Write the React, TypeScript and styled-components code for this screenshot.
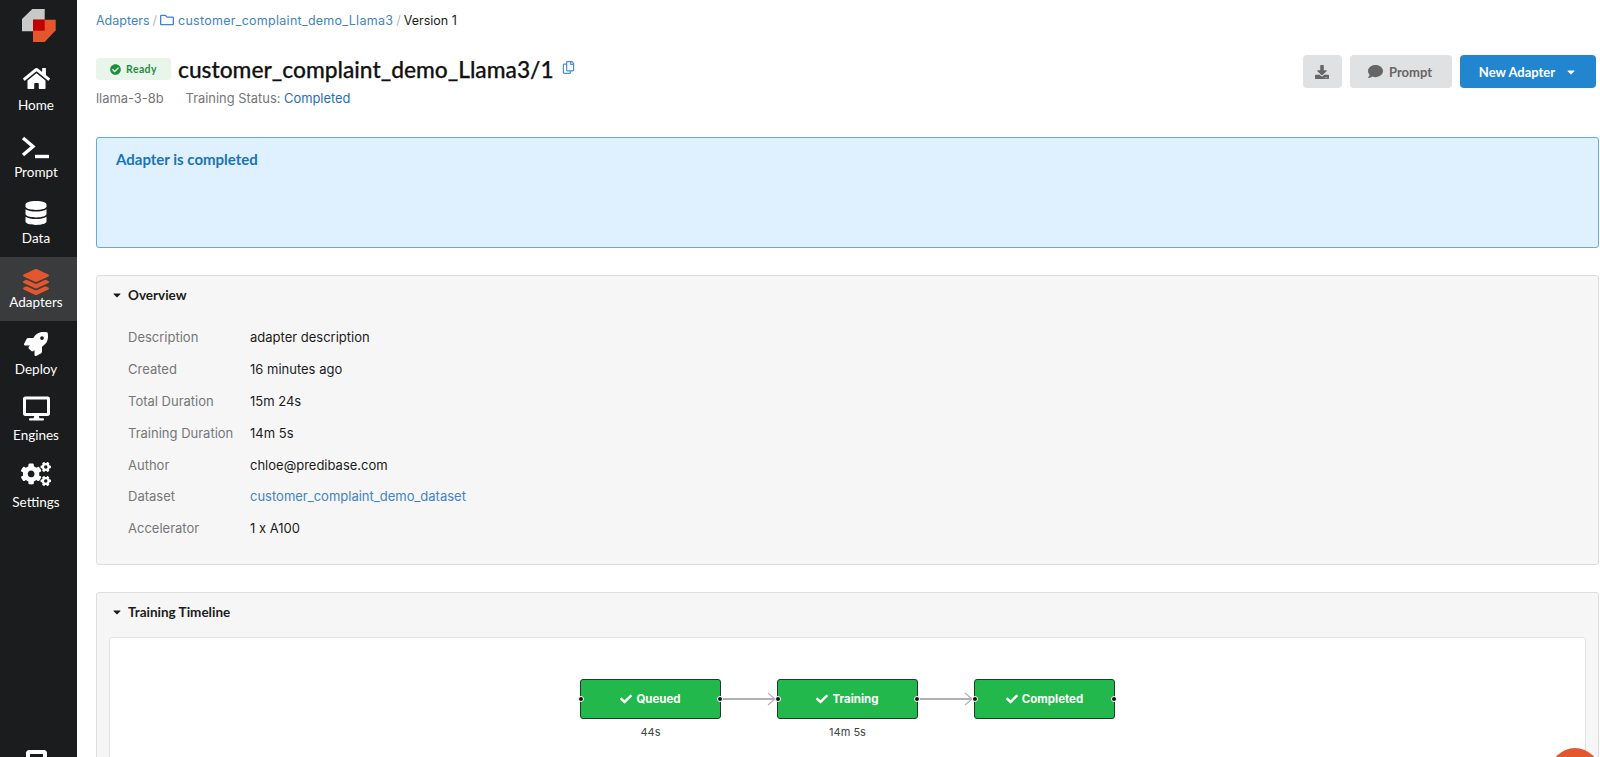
import React from 'react';
import styled, { createGlobalStyle } from 'styled-components';
import {
  FaCaretDown,
  FaCheck,
  FaCheckCircle,
  FaCogs,
  FaComment,
  FaDatabase,
  FaDesktop,
  FaDownload,
  FaHome,
  FaLayerGroup,
  FaRegCopy,
  FaRegFolder,
  FaRocket,
} from 'react-icons/fa';

const GlobalStyle = createGlobalStyle`
  html, body {
    margin: 0;
    height: 100%;
    overflow: hidden;
    background: #fff;
    font-family: Inter, "Liberation Sans", sans-serif;
  }
  #root { height: 100%; }
  * { box-sizing: border-box; }
`;

const Shell = styled.div`
  display: flex;
  height: 757px;
  overflow: hidden;
`;

const Sidebar = styled.nav`
  flex: 0 0 77px;
  height: 757px;
  background: #1b1c1d;
  display: flex;
  flex-direction: column;
  overflow: hidden;
`;

const LogoWrap = styled.div`
  height: 57.5px;
  padding: 9px 0 0 22px;
`;

const NavItem = styled.div<{ $active?: boolean }>`
  height: ${(p) => (p.$active ? 64 : 66.5)}px;
  display: flex;
  flex-direction: column;
  align-items: center;
  justify-content: flex-end;
  padding: 0 5px 11px 0;
  background: ${(p) => (p.$active ? '#3a3b3c' : 'transparent')};
  color: #fff;
  font: 400 13.5px/16px Lato, sans-serif;

  svg {
    color: ${(p) => (p.$active ? '#e4572e' : '#fff')};
    margin-bottom: ${(p) => (p.$active ? -1 : 5)}px;
  }
`;

const NavFoot = styled.div`
  margin-top: auto;
  margin-right: 5px;
  align-self: center;
  width: 21px;
  height: 7px;
  border: 4px solid #fff;
  border-bottom: 0;
  border-radius: 4px 4px 0 0;
`;

const Main = styled.main`
  flex: 1;
  min-width: 0;
  padding: 0 1px 0 19px;
`;

const Breadcrumb = styled.div`
  height: 40px;
  display: flex;
  align-items: center;
  gap: 3px;
  font-size: 12.5px;
  color: #1b1c1d;
`;

const CrumbLink = styled.a<{ $wide?: boolean }>`
  color: #4183c4;
  display: inline-flex;
  align-items: center;
  gap: 4px;
  letter-spacing: ${(p) => (p.$wide ? '0.27px' : '0')};
`;

const CrumbSep = styled.span`
  color: #b5b5b5;
`;

const Header = styled.header`
  display: flex;
  justify-content: space-between;
  align-items: flex-start;
  height: 97px;
  padding-right: 3px;
`;

const TitleRow = styled.div`
  display: flex;
  align-items: center;
  margin-top: 18px;
  height: 22px;
`;

const ReadyBadge = styled.span`
  width: 75px;
  height: 22px;
  border-radius: 3px;
  background: #e8f5ea;
  color: #1e8e3e;
  display: inline-flex;
  align-items: center;
  justify-content: center;
  gap: 5px;
  font: 700 10.5px Lato, sans-serif;
  letter-spacing: 0.4px;
  margin-right: 7px;
`;

const Title = styled.h1`
  margin: 1px 8px 0 0;
  font: 500 22.75px/28px Lato, sans-serif;
  -webkit-text-stroke: 0.25px #111;
  color: #111;
`;

const CopyIcon = styled(FaRegCopy)`
  color: #4a90d9;
  font-size: 13px;
  margin-top: -3px;
`;

const SubRow = styled.div`
  display: flex;
  gap: 22px;
  margin-top: 10px;
  font-size: 12.9px;
  line-height: 18px;
  color: #767676;
`;

const StatusValue = styled.span`
  color: #1f6fb5;
`;

const Actions = styled.div`
  display: flex;
  gap: 8px;
  margin-top: 15px;
`;

const Button = styled.button<{ $primary?: boolean; $width: number }>`
  width: ${(p) => p.$width}px;
  height: 33px;
  border: 0;
  border-radius: 4px;
  background: ${(p) => (p.$primary ? '#2185d0' : '#e0e1e2')};
  color: ${(p) => (p.$primary ? '#fff' : '#666')};
  display: flex;
  align-items: center;
  justify-content: center;
  gap: 6px;
  font: 700 13px Lato, sans-serif;
  padding: 0 ${(p) => (p.$primary ? 0 : 2)}px 0 0;
`;

const CaretSlot = styled.span`
  display: inline-flex;
  margin-left: 4px;
`;

const Alert = styled.section`
  height: 111px;
  border: 1px solid #6aa9dd;
  border-radius: 3px;
  background: #dff0ff;
  padding: 11px 19px;
  color: #1a73b8;
  font: 700 15px/20px Lato, sans-serif;
`;

const Panel = styled.section<{ $height?: number }>`
  margin-top: 27px;
  ${(p) => (p.$height ? `height: ${p.$height}px;` : '')}
  background: #f6f6f6;
  border: 1px solid #dedede;
  border-radius: 3px;
  padding: 0 12px;
`;

const PanelTitle = styled.div`
  height: 37px;
  display: flex;
  align-items: center;
  gap: 5px;
  padding-left: 2px;
  font: 700 13.5px Lato, sans-serif;
  color: #1b1c1d;
  svg { font-size: 12px; }
`;

const DetailList = styled.dl`
  margin: 8px 0 0 19px;
  display: grid;
  grid-template-columns: 122px 1fr;
  grid-auto-rows: 31.9px;
  align-items: center;
  font-size: 13px;
`;

const DetailLabel = styled.dt`
  color: #767676;
`;

const DetailValue = styled.dd`
  margin: 0;
  color: #1b1c1d;
`;

const DatasetLink = styled.a`
  color: #4183c4;
`;

const TimelineCard = styled.div`
  height: 130px;
  margin-top: 7px;
  background: #fff;
  border: 1px solid #e4e4e4;
  border-radius: 3px;
  padding-top: 41px;
  display: flex;
  justify-content: center;
`;

const Step = styled.div`
  width: 141px;
  display: flex;
  flex-direction: column;
  align-items: center;
`;

const Node = styled.div`
  position: relative;
  width: 100%;
  height: 40px;
  background: #22b84c;
  border: 1px solid #1c3d26;
  border-radius: 3px;
  color: #fff;
  display: flex;
  align-items: center;
  justify-content: center;
  gap: 4px;
  font: 700 11.5px Inter, sans-serif;
`;

const Handle = styled.span<{ $side: 'left' | 'right' }>`
  position: absolute;
  top: 50%;
  ${(p) => p.$side}: -3px;
  width: 6px;
  height: 6px;
  margin-top: -3px;
  border-radius: 50%;
  background: #111;
  border: 0.5px solid #fff;
`;

const Duration = styled.div`
  margin-top: 6px;
  font-size: 11px;
  color: #444;
`;

const Arrow = styled.svg`
  flex: 0 0 56px;
  width: 56px;
  height: 40px;
`;

const HelpBubble = styled.div`
  position: fixed;
  left: 1550px;
  top: 748px;
  width: 50px;
  height: 50px;
  border-radius: 50%;
  background: #e4572e;
`;

function PromptIcon() {
  return (
    <svg width="30" height="24" viewBox="0 0 30 24" fill="none" stroke="#fff" strokeWidth="3.4">
      <path d="M2 3l10 8.5L2 20" />
      <path d="M14 21.5h14" />
    </svg>
  );
}

function Logo() {
  return (
    <svg width="34" height="33" viewBox="0 0 34 33">
      <path d="M0 10L10.3 0h12.4v10.7H11v11.6H0z" fill="#c9c9c9" />
      <path d="M11 10.7h22.7v10.6L22.7 33H11z" fill="#e4572e" />
      <rect x="11" y="10.7" width="11.7" height="11" fill="#c00000" />
    </svg>
  );
}

const navItems = [
  { label: 'Home', icon: <FaHome size={27} /> },
  { label: 'Prompt', icon: <PromptIcon /> },
  { label: 'Data', icon: <FaDatabase size={24} /> },
  { label: 'Adapters', icon: <FaLayerGroup size={26} />, active: true },
  { label: 'Deploy', icon: <FaRocket size={24} /> },
  { label: 'Engines', icon: <FaDesktop size={27} /> },
  { label: 'Settings', icon: <FaCogs size={30} /> },
];

const details = [
  ['Description', 'adapter description'],
  ['Created', '16 minutes ago'],
  ['Total Duration', '15m 24s'],
  ['Training Duration', '14m 5s'],
  ['Author', 'chloe@predibase.com'],
];

const steps = [
  { name: 'Queued', time: '44s' },
  { name: 'Training', time: '14m 5s' },
  { name: 'Completed', time: '' },
];

export default function App() {
  return (
    <>
      <GlobalStyle />
      <Shell>
        <Sidebar>
          <LogoWrap>
            <Logo />
          </LogoWrap>
          {navItems.map((item) => (
            <NavItem $active={item.active} key={item.label}>
              {item.icon}
              {item.label}
            </NavItem>
          ))}
          <NavFoot />
        </Sidebar>

        <Main>
          <Breadcrumb>
            <CrumbLink>Adapters</CrumbLink>
            <CrumbSep>/</CrumbSep>
            <CrumbLink $wide>
              <FaRegFolder size={14} />
              customer_complaint_demo_Llama3
            </CrumbLink>
            <CrumbSep>/</CrumbSep>
            Version 1
          </Breadcrumb>

          <Header>
            <div>
              <TitleRow>
                <ReadyBadge>
                  <FaCheckCircle size={11} />
                  Ready
                </ReadyBadge>
                <Title>customer_complaint_demo_Llama3/1</Title>
                <CopyIcon />
              </TitleRow>
              <SubRow>
                <span>llama-3-8b</span>
                <span>
                  Training Status: <StatusValue>Completed</StatusValue>
                </span>
              </SubRow>
            </div>
            <Actions>
              <Button $width={39}>
                <FaDownload size={14} />
              </Button>
              <Button $width={102}>
                <FaComment size={15} />
                Prompt
              </Button>
              <Button $primary $width={136}>
                New Adapter
                <CaretSlot>
                  <FaCaretDown size={12} />
                </CaretSlot>
              </Button>
            </Actions>
          </Header>

          <Alert>Adapter is completed</Alert>

          <Panel $height={290}>
            <PanelTitle>
              <FaCaretDown />
              Overview
            </PanelTitle>
            <DetailList>
              {details.map(([label, value]) => (
                <React.Fragment key={label}>
                  <DetailLabel>{label}</DetailLabel>
                  <DetailValue>{value}</DetailValue>
                </React.Fragment>
              ))}
              <DetailLabel>Dataset</DetailLabel>
              <DetailValue>
                <DatasetLink>customer_complaint_demo_dataset</DatasetLink>
              </DetailValue>
              <DetailLabel>Accelerator</DetailLabel>
              <DetailValue>1 x A100</DetailValue>
            </DetailList>
          </Panel>

          <Panel>
            <PanelTitle>
              <FaCaretDown />
              Training Timeline
            </PanelTitle>
            <TimelineCard>
              {steps.map((step, i) => (
                <React.Fragment key={step.name}>
                  {i > 0 && (
                    <Arrow viewBox="0 0 56 40" fill="none" stroke="#b1b1b1">
                      <path d="M2 20h51" strokeWidth="1.8" />
                      <path d="M47 14l7 6-7 6" strokeWidth="1.1" />
                    </Arrow>
                  )}
                  <Step>
                    <Node>
                      <Handle $side="left" />
                      <FaCheck size={12} />
                      {step.name}
                      <Handle $side="right" />
                    </Node>
                    <Duration>{step.time}</Duration>
                  </Step>
                </React.Fragment>
              ))}
            </TimelineCard>
          </Panel>
        </Main>
      </Shell>
      <HelpBubble />
    </>
  );
}
